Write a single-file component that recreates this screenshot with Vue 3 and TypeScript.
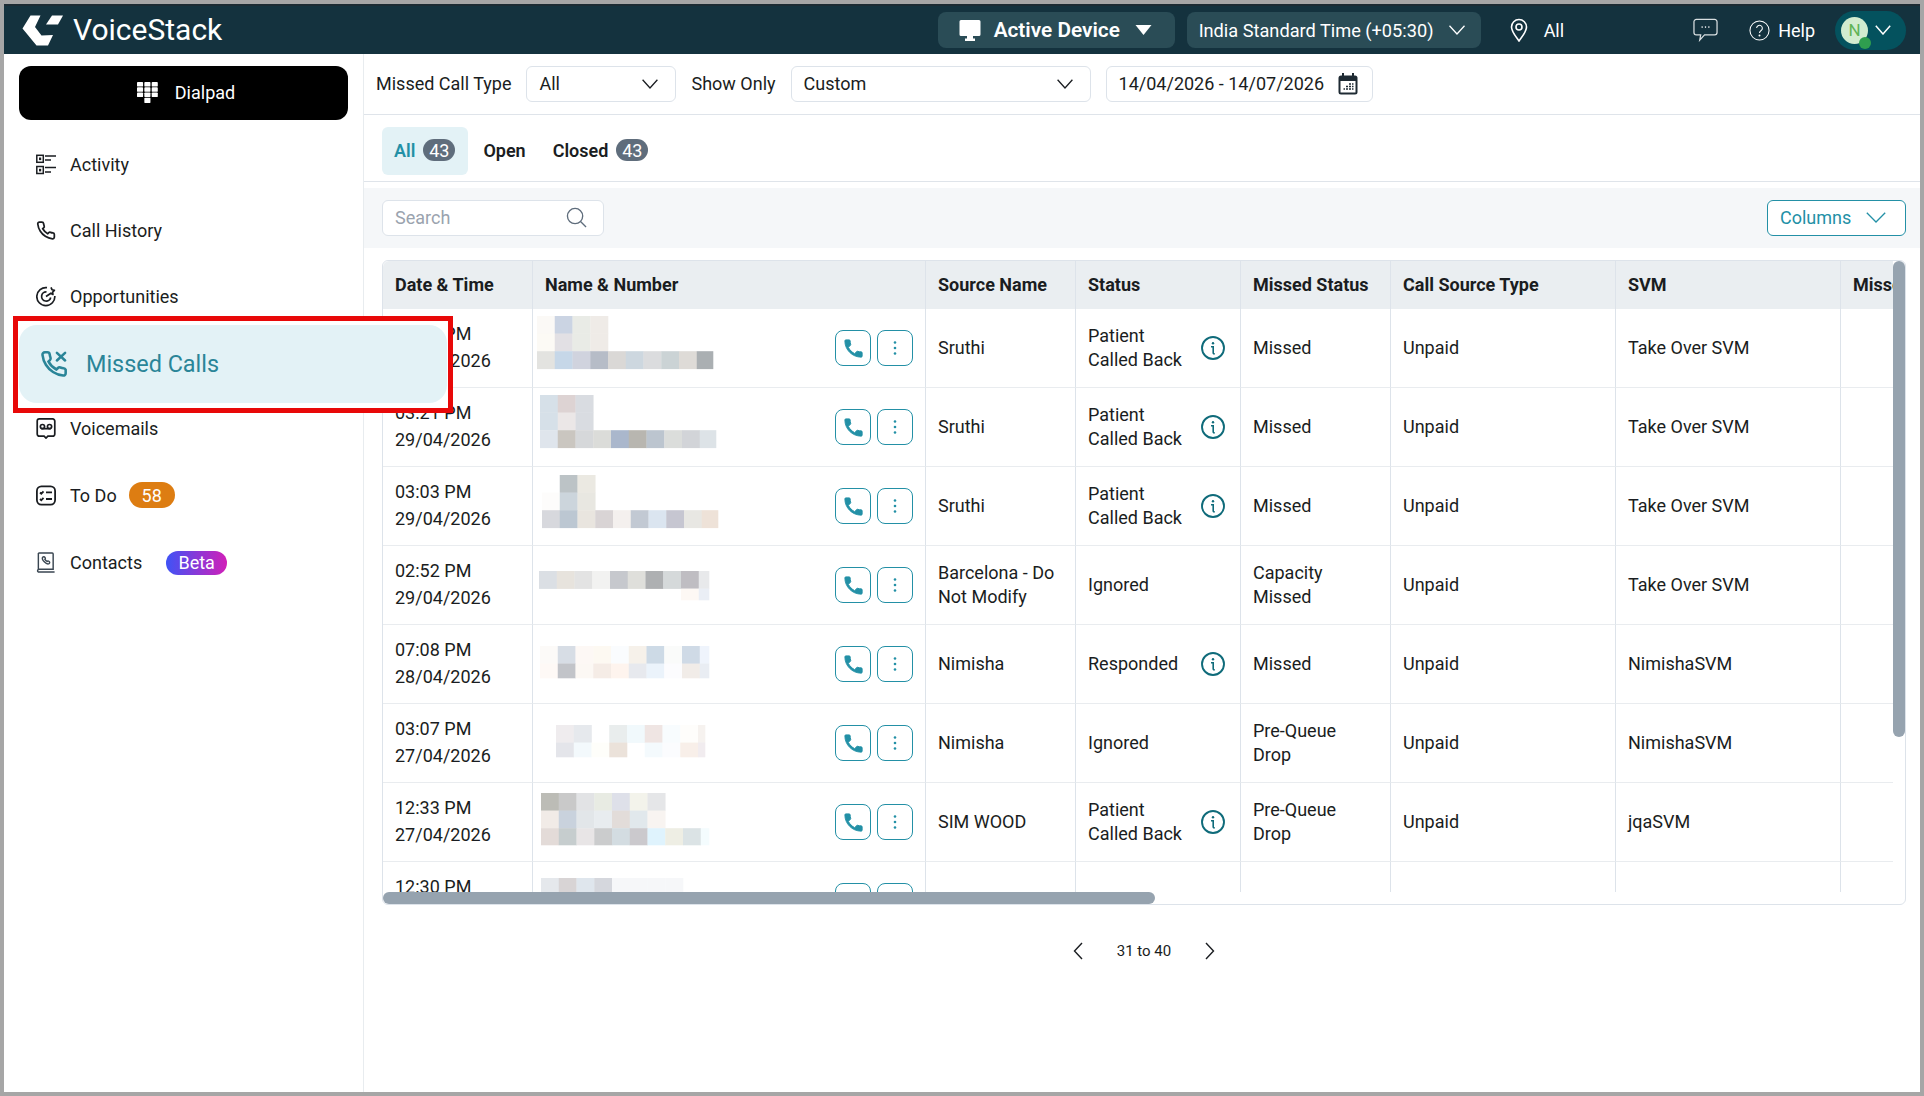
<script setup lang="ts">
interface Mosaic { x: number; y: number; w: number; h: number; cells: string[][] }
interface Row { time: string; date: string; source: string; status: string; info: boolean; missed: string; type: string; svm: string; mosaic: Mosaic }

const STEP_X = 17.75
const STEP_Y = 17.6

const rows: Row[] = [
  { time: '03:28 PM', date: '29/04/2026', source: 'Sruthi', status: 'Patient Called Back', info: true, missed: 'Missed', type: 'Unpaid', svm: 'Take Over SVM',
    mosaic: { x: 4, y: 7, w: 176, h: 53, cells: [
      ['#fbf9f6', '#cbd4e3', '#e9ebe6', '#efebe7'],
      ['#fcfaf5', '#e2e0e4', '#e9ebe6', '#efebe7'],
      ['#e3e3e0', '#c6d7e8', '#d0d3de', '#b6bcc7', '#dad8d6', '#cdd7df', '#dbdcde', '#cbd3d5', '#dedbd7', '#aaafb2']] } },
  { time: '03:21 PM', date: '29/04/2026', source: 'Sruthi', status: 'Patient Called Back', info: true, missed: 'Missed', type: 'Unpaid', svm: 'Take Over SVM',
    mosaic: { x: 7, y: 7, w: 176, h: 53, cells: [
      ['#d6e0e8', '#ddd3d3', '#d9dce1'],
      ['#d6e0e8', '#ebe7e7', '#d9dce1'],
      ['#dfe5ec', '#cac6c0', '#d6d8da', '#dbdcd9', '#aab7cc', '#b8b6b0', '#bcc5cf', '#dbdddb', '#d2d4d8', '#dde3e7']] } },
  { time: '03:03 PM', date: '29/04/2026', source: 'Sruthi', status: 'Patient Called Back', info: true, missed: 'Missed', type: 'Unpaid', svm: 'Take Over SVM',
    mosaic: { x: 9, y: 8, w: 176, h: 53, cells: [
      ['', '#bcc3c6', '#ebe9e2'],
      ['#fdfcfb', '#ccd5dc', '#e8e7e1'],
      ['#d7d8dd', '#bcc7d2', '#e9e5df', '#d9d4d5', '#f4f0ee', '#c2c9d3', '#dbe5f0', '#c6c6d1', '#e8e7e3', '#eee2d8']] } },
  { time: '02:52 PM', date: '29/04/2026', source: 'Barcelona - Do Not Modify', status: 'Ignored', info: false, missed: 'Capacity Missed', type: 'Unpaid', svm: 'Take Over SVM',
    mosaic: { x: 6, y: 25, w: 170, h: 29, cells: [
      ['#dbdfe4', '#e7e3dd', '#e3e3e3', '#f2f2f1', '#c6c8cd', '#dfdfdb', '#aeb0b2', '#d5d9da', '#bfbdc2', '#e8e9eb'],
      ['', '', '', '', '', '', '', '', '#fdf8f4', '#eaeef5']] } },
  { time: '07:08 PM', date: '28/04/2026', source: 'Nimisha', status: 'Responded', info: true, missed: 'Missed', type: 'Unpaid', svm: 'NimishaSVM',
    mosaic: { x: 7, y: 21, w: 169, h: 32, cells: [
      ['#fcfaf8', '#d7dde5', '#fdf8f5', '#fdf9f2', '#fafcfe', '#f6f1ea', '#cddae6', '#fafbfa', '#cfdae6', '#eff4fc'],
      ['#fef9f6', '#c2c4c9', '#fcf8f4', '#f5ece6', '#fef4ee', '#e7e9ee', '#ebf3fb', '#fcfcfe', '#f1ece8', '#e9edf3']] } },
  { time: '03:07 PM', date: '27/04/2026', source: 'Nimisha', status: 'Ignored', info: false, missed: 'Pre-Queue Drop', type: 'Unpaid', svm: 'NimishaSVM',
    mosaic: { x: 23, y: 21, w: 149, h: 32, cells: [
      ['#efecee', '#e6e9ed', '', '#e9eded', '#f1f9fc', '#efe5e3', '#f8fcfe', '#fefdfb', '#f6f2ef'],
      ['#e4e5ea', '#f3f9fc', '#fefefa', '#ebe2da', '', '#f4fafd', '#fbfcfe', '#f8efe9', '#f1ecef']] } },
  { time: '12:33 PM', date: '27/04/2026', source: 'SIM WOOD', status: 'Patient Called Back', info: true, missed: 'Pre-Queue Drop', type: 'Unpaid', svm: 'jqaSVM',
    mosaic: { x: 8, y: 10, w: 168, h: 52, cells: [
      ['#bcbcb6', '#c9c9c9', '#e2e3e5', '#e8ebe3', '#dee0e9', '#f3f3eb', '#e5e6e8'],
      ['#f1ebe7', '#c9d2dd', '#e2e6e9', '#e8ecef', '#e2dcd9', '#e1e8ec', '#f8f4f1'],
      ['#e3dbd8', '#c6cdce', '#e8e5e6', '#cbcccd', '#d3dce1', '#cbc9cd', '#dff3fd', '#eeeee4', '#dbe3e5', '#f4fcfe']] } },
  { time: '12:30 PM', date: '27/04/2026', source: 'SIM WOOD', status: 'Ignored', info: false, missed: 'Missed', type: 'Unpaid', svm: 'jqaSVM',
    mosaic: { x: 8, y: 16, w: 142, h: 18, cells: [
      ['#e5e8ec', '#d8d4d5', '#dfe6ed', '#d5d7dd', '#f6f7f9', '#f6f7f9', '#f6f7f9', '#f6f7f9']] } },
]

const columns: string[] = ['Date & Time', 'Name & Number', 'Source Name', 'Status', 'Missed Status', 'Call Source Type', 'SVM', 'Missed By']
const colWidths: number[] = [150, 393, 150, 165, 150, 225, 225, 200]

function rects(m: Mosaic) {
  const out: { x: number; y: number; w: number; h: number; fill: string }[] = []
  m.cells.forEach((line, r) => {
    line.forEach((fill, c) => {
      if (!fill) return
      const x = c * STEP_X
      const y = r * STEP_Y
      out.push({
        x: m.x + x,
        y: m.y + y,
        w: Math.min(STEP_X, m.w - x),
        h: Math.min(STEP_Y, m.h - y),
        fill,
      })
    })
  })
  return out
}
</script>

<template>
  <div class="frame">
    <header class="topbar">
      <div class="brand">
        <svg class="logo" viewBox="0 0 42 31" width="42" height="31" fill="#fff">
          <polygon points="8.5,0.5 18.5,0.5 13,12 19.5,20.5 31,20 26,30.5 14.5,30.5 0.5,13.5" />
          <polygon points="30,0.5 41,0.5 36,9.5 24,9.5" />
        </svg>
        <span class="brand-name">VoiceStack</span>
      </div>
      <div class="top-right">
        <div class="pill pill-device">
          <svg viewBox="0 0 24 24" width="24" height="26" fill="#fff">
            <path d="M3 2h18a1.5 1.5 0 0 1 1.5 1.5v13A1.5 1.5 0 0 1 21 18h-6v2.5h2V23H7v-2.5h2V18H3a1.5 1.5 0 0 1-1.500-1.500v-13A1.500 1.500 0 0 1 3 2z" />
          </svg>
          <span class="device-text">Active Device</span>
          <svg viewBox="0 0 16 10" width="17" height="10" fill="#fff"><polygon points="0,0 16,0 8,10" /></svg>
        </div>
        <div class="pill pill-tz">
          <span>India Standard Time (+05:30)</span>
          <svg viewBox="0 0 16 10" width="16" height="10" fill="none" stroke="#fff" stroke-width="1.300"><path d="M0.500 0.800 8 9 15.500 0.800" /></svg>
        </div>
        <div class="loc">
          <svg viewBox="0 0 20 24" width="20" height="24" fill="none" stroke="#fff" stroke-width="1.600">
            <path d="M10 23C6 17.500 2.500 13.500 2.500 9a7.500 7.500 0 0 1 15 0C17.500 13.500 14 17.500 10 23z" />
            <circle cx="10" cy="9" r="3" />
          </svg>
          <span>All</span>
        </div>
        <svg class="chat" viewBox="0 0 26 24" width="25" height="24" fill="none" stroke="#d9dfe1" stroke-width="1.300">
          <path d="M3.500 1h19A2.500 2.500 0 0 1 25 3.500v11a2.500 2.500 0 0 1-2.500 2.500H12l-5 5.500 1-5.500H3.500A2.500 2.500 0 0 1 1 14.500v-11A2.500 2.500 0 0 1 3.500 1z" />
          <circle cx="9.500" cy="9" r=".8" fill="#fff" stroke="none" />
          <circle cx="13" cy="9" r=".8" fill="#fff" stroke="none" />
          <circle cx="16.500" cy="9" r=".8" fill="#fff" stroke="none" />
        </svg>
        <div class="help">
          <svg viewBox="0 0 22 22" width="21" height="21" fill="none" stroke="#fff" stroke-width="1.100">
            <circle cx="11" cy="11" r="10" />
            <path d="M8 8.500a3 3 0 1 1 4.700 2.500c-1.100.8-1.700 1.300-1.700 2.700" />
            <circle cx="11" cy="16.200" r=".5" fill="#fff" />
          </svg>
          <span>Help</span>
        </div>
        <div class="user">
          <div class="avatar">N<i class="online"></i></div>
          <svg viewBox="0 0 16 10" width="16" height="10" fill="none" stroke="#fff" stroke-width="1.500"><path d="M0.800 0.800 8 9 15.200 0.800" /></svg>
        </div>
      </div>
    </header>

    <div class="body">
      <aside class="sidebar">
        <button class="dialpad">
          <svg viewBox="0 0 20 20" width="21" height="21" fill="#fff">
            <rect v-for="p in [[0,0],[7,0],[14,0],[0,5],[7,5],[14,5],[0,10],[7,10],[14,10]]" :key="p.join()" :x="p[0]" :y="p[1]" width="5.800" height="4.400" rx=".8" />
            <rect x="7" y="15" width="5.800" height="5" rx=".8" />
          </svg>
          <span>Dialpad</span>
        </button>
        <nav class="nav">
          <a class="nav-item">
            <svg class="ico" viewBox="0 0 20 20" fill="none" stroke="#1a1d21" stroke-width="1.500">
              <rect x=".8" y=".8" width="6.500" height="7" /><rect x="3" y="3" width="2.200" height="2.600" fill="#1a1d21" stroke="none" />
              <rect x=".8" y="12" width="6.500" height="7" /><rect x="3" y="14.300" width="2.200" height="2.600" fill="#1a1d21" stroke="none" />
              <path d="M9 1.500h11M9 5.500h6M9 13h11M9 17.500h6" />
            </svg>
            <span>Activity</span>
          </a>
          <a class="nav-item">
            <svg class="ico" viewBox="0 0 24 24" fill="none" stroke="#1a1d21" stroke-width="2.100">
              <path d="M22 16.920v3a2 2 0 0 1-2.180 2 19.790 19.790 0 0 1-8.630-3.070 19.500 19.500 0 0 1-6-6 19.790 19.790 0 0 1-3.070-8.670A2 2 0 0 1 4.110 2h3a2 2 0 0 1 2 1.720 12.840 12.840 0 0 0 .7 2.810 2 2 0 0 1-.45 2.110L8.090 9.910a16 16 0 0 0 6 6l1.270-1.270a2 2 0 0 1 2.110-.45 12.840 12.840 0 0 0 2.810.7A2 2 0 0 1 22 16.920z" />
            </svg>
            <span>Call History</span>
          </a>
          <a class="nav-item">
            <svg class="ico" viewBox="0 0 20 20" fill="none" stroke="#1a1d21" stroke-width="1.700">
              <path d="M11 1.200A9 9 0 1 0 18.800 9.500" />
              <path d="M10.500 5.400A4.600 4.600 0 1 0 14.700 11" />
              <path d="M15 .8l1 2.400 2.400.6-1.700 1.700.2 2.500-2-1.300L10 10" stroke-linejoin="round" />
            </svg>
            <span>Opportunities</span>
          </a>
          <div class="nav-slot">
            <div class="callout">
              <a class="nav-active">
                <svg viewBox="0 0 24 24" width="28" height="28" fill="none" stroke="#2a8598" stroke-width="2.200" stroke-linecap="round">
                  <path d="M22 16.920v3a2 2 0 0 1-2.180 2 19.790 19.790 0 0 1-8.630-3.070 19.500 19.500 0 0 1-6-6 19.790 19.790 0 0 1-3.070-8.670A2 2 0 0 1 4.110 2h2.200a2 2 0 0 1 2 1.720 12.840 12.840 0 0 0 .7 2.810 2 2 0 0 1-.45 2.110L7.300 9.910a16 16 0 0 0 6.800 6.800l1.270-1.270a2 2 0 0 1 2.110-.45 12.840 12.840 0 0 0 2.810.7A2 2 0 0 1 22 16.920z" />
                  <path d="M14.500 2.500l7 6.500M21.500 2.500l-7 6.500" />
                </svg>
                <span>Missed Calls</span>
              </a>
            </div>
          </div>
          <a class="nav-item">
            <svg class="ico" viewBox="0 0 20 22" fill="none" stroke="#1a1d21" stroke-width="1.800">
              <path d="M3 1h14a2.200 2.200 0 0 1 2.200 2.200v13.600A2.200 2.200 0 0 1 17 19h-5l-2 2-2-2H3A2.200 2.200 0 0 1 .8 16.800V3.200A2.200 2.200 0 0 1 3 1z" />
              <circle cx="6.300" cy="9" r="2.200" /><circle cx="13.700" cy="9" r="2.200" /><path d="M5 11.200h10" />
            </svg>
            <span>Voicemails</span>
          </a>
          <a class="nav-item todo">
            <svg class="ico" viewBox="0 0 20 20" fill="none" stroke="#1a1d21" stroke-width="1.800">
              <rect x=".9" y=".9" width="18.200" height="18.200" rx="4.500" />
              <path d="M4 7l1.300 1.300L7.500 5.800M4 13.500l1.300 1.300 2.200-2.500M10 6.800h6M10 13.500h6" />
            </svg>
            <span>To Do</span>
            <b class="count">58</b>
          </a>
          <a class="nav-item tall">
            <svg class="ico" viewBox="0 0 20 22" fill="none" stroke="#3a4651" stroke-width="1.500">
              <path d="M2 1h14.500a1 1 0 0 1 1 1v16H3a1.600 1.600 0 0 0-1 3h17M2 1v18" />
              <path d="M6.500 5.500c1-1 2-.7 2.600.4.500.8.200 1.400-.2 1.800.6 1 1.200 1.600 2.200 2.200.5-.5 1.100-.7 1.900-.2 1 .7 1.200 1.700.2 2.500-2.800 1.400-8.300-4.300-6.700-6.700z" />
            </svg>
            <span>Contacts</span>
            <b class="beta">Beta</b>
          </a>
        </nav>
      </aside>

      <main class="main">
        <div class="filters">
          <label class="lbl">Missed Call Type</label>
          <div class="select sel-type">
            <span>All</span>
            <svg viewBox="0 0 16 10" width="16" height="10" fill="none" stroke="#1a1d21" stroke-width="1.300"><path d="M0.600 0.800 8 9 15.400 0.800" /></svg>
          </div>
          <label class="lbl">Show Only</label>
          <div class="select sel-show">
            <span>Custom</span>
            <svg viewBox="0 0 16 10" width="16" height="10" fill="none" stroke="#1a1d21" stroke-width="1.300"><path d="M0.600 0.800 8 9 15.400 0.800" /></svg>
          </div>
          <div class="select sel-date">
            <span>14/04/2026 - 14/07/2026</span>
            <svg viewBox="0 0 20 22" width="20" height="22">
              <rect x="0.500" y="2.500" width="19" height="19" rx="2.500" fill="#1e2a33" />
              <rect x="4" y="0" width="2" height="4" fill="#1e2a33" /><rect x="14" y="0" width="2" height="4" fill="#1e2a33" />
              <rect x="2.500" y="8" width="15" height="11.500" fill="#fff" />
              <path d="M11 16h2M14 16h1.500M11 13.500h2M14 13.500h1.500M8 16h2M5.500 16h1.500M8 13.500h2M14 11h1.500M11 11h2" stroke="#1e2a33" stroke-width="1.400" />
            </svg>
          </div>
        </div>

        <div class="tabs">
          <a class="tab active">All <b>43</b></a>
          <a class="tab">Open</a>
          <a class="tab">Closed <b>43</b></a>
        </div>

        <div class="toolbar">
          <div class="search">
            <span>Search</span>
            <svg viewBox="0 0 22 22" width="21" height="21" fill="none" stroke="#5f6d7c" stroke-width="1.400"><circle cx="9.500" cy="9.500" r="8" /><path d="M15.500 15.500 21 21" /></svg>
          </div>
          <div class="columns-btn">
            <span>Columns</span>
            <svg viewBox="0 0 20 11" width="20" height="11" fill="none" stroke="#2390a6" stroke-width="1.300"><path d="M0.800 0.800 10 10 19.200 0.800" /></svg>
          </div>
        </div>

        <div class="table-box">
          <div class="table-clip">
            <table>
              <colgroup><col v-for="(w, i) in colWidths" :key="i" :style="{ width: w + 'px' }" /></colgroup>
              <thead>
                <tr><th v-for="c in columns" :key="c">{{ c }}</th></tr>
              </thead>
              <tbody>
                <tr v-for="(r, i) in rows" :key="i">
                  <td class="when"><div>{{ r.time }}</div><div>{{ r.date }}</div></td>
                  <td class="name">
                    <div class="name-cell">
                      <svg class="mosaic" width="190" height="78">
                        <rect v-for="(c, j) in rects(r.mosaic)" :key="j" :x="c.x" :y="c.y" :width="c.w + 0.300" :height="c.h + 0.300" :fill="c.fill" />
                      </svg>
                      <div class="actions">
                        <button class="act">
                          <svg viewBox="0 0 24 24" width="23" height="23" fill="#2390a6" stroke="#2390a6" stroke-width="1" stroke-linejoin="round"><path d="M6.620 10.790c1.440 2.830 3.760 5.140 6.590 6.590l2.200-2.200c.27-.27.670-.36 1.020-.24 1.120.37 2.330.57 3.570.57.55 0 1 .45 1 1V20c0 .55-.45 1-1 1-9.390 0-17-7.610-17-17 0-.55.45-1 1-1h3.500c.55 0 1 .45 1 1 0 1.250.2 2.450.57 3.570.11.35.03.74-.25 1.020l-2.200 2.200z" /></svg>
                        </button>
                        <button class="act">
                          <svg viewBox="0 0 4 14" width="4" height="14" fill="#2390a6"><circle cx="2" cy="1.500" r="1.300" /><circle cx="2" cy="7" r="1.300" /><circle cx="2" cy="12.500" r="1.300" /></svg>
                        </button>
                      </div>
                    </div>
                  </td>
                  <td>{{ r.source }}</td>
                  <td>
                    <div class="status">
                      <span>{{ r.status }}</span>
                      <svg v-if="r.info" viewBox="0 0 24 24" width="24" height="24" fill="none" stroke="#0f6b7a" stroke-width="1.900">
                        <circle cx="12" cy="12" r="11" />
                        <circle cx="12" cy="7.200" r="1.200" fill="#0f6b7a" stroke="none" />
                        <path d="M10 10.800h2.200v6c0 .9.600 1.100 1.600.9" stroke-width="1.600" />
                      </svg>
                    </div>
                  </td>
                  <td>{{ r.missed }}</td>
                  <td>{{ r.type }}</td>
                  <td>{{ r.svm }}</td>
                  <td></td>
                </tr>
              </tbody>
            </table>
          </div>
          <div class="vscroll"></div>
          <div class="hscroll"></div>
        </div>

        <div class="pager">
          <svg viewBox="0 0 10 18" width="10" height="18" fill="none" stroke="#1a1d21" stroke-width="1.400"><path d="M9 1 1.500 9 9 17" /></svg>
          <span>31 to 40</span>
          <svg viewBox="0 0 10 18" width="10" height="18" fill="none" stroke="#1a1d21" stroke-width="1.400"><path d="M1 1 8.500 9 1 17" /></svg>
        </div>
      </main>
    </div>
  </div>
</template>

<style scoped>
.frame {
  width: 1924px;
  height: 1096px;
  box-sizing: border-box;
  border: 4px solid #a6a6a6;
  background: #fff;
  display: flex;
  flex-direction: column;
  overflow: hidden;
  font-family: Roboto, "Liberation Sans", sans-serif;
  font-size: 18px;
  color: #1a1d21;
}
.topbar {
  height: 50px;
  box-sizing: border-box;
  flex: none;
  background: #14323e;
  border-top: 2px solid #1c2b33;
  display: flex;
  align-items: center;
  justify-content: space-between;
  color: #fff;
}
.brand { display: flex; align-items: center; padding-left: 18px; }
.logo { display: block; }
.brand-name { margin-left: 9px; font-size: 30px; line-height: 1; }
.top-right { display: flex; align-items: center; }
.pill {
  height: 36px;
  border-radius: 8px;
  background: #2a4c56;
  display: flex;
  align-items: center;
  box-sizing: border-box;
}
.pill-device { width: 237px; padding-left: 20px; }
.device-text { margin: 0 15px 0 12px; font-size: 20.8px; font-weight: 600; }
.pill-tz { width: 294px; margin-left: 12px; padding-left: 12px; gap: 15px; font-size: 18.2px; }
.loc { display: flex; align-items: center; margin-left: 28px; gap: 15px; }
.chat { margin-left: 129px; }
.help { display: flex; align-items: center; gap: 8px; margin-left: 31px; }
.user {
  margin: 0 14px 0 20px;
  width: 71px;
  height: 39px;
  box-sizing: border-box;
  border-radius: 20px;
  background: #04525e;
  display: flex;
  align-items: center;
  padding-left: 6px;
  gap: 7px;
}
.avatar {
  position: relative;
  width: 27px;
  height: 27px;
  border-radius: 50%;
  background: #d2ecd0;
  color: #5fb356;
  display: flex;
  align-items: center;
  justify-content: center;
  font-size: 17px;
}
.online {
  position: absolute;
  right: -3px;
  bottom: -5px;
  width: 12px;
  height: 12px;
  border-radius: 50%;
  background: #2f9e4f;
}
.body { flex: 1; display: flex; min-height: 0; }
.sidebar {
  width: 360px;
  flex: none;
  box-sizing: border-box;
  border-right: 1px solid #e8ecef;
  padding: 12px 15px 0;
}
.dialpad {
  width: 329px;
  height: 54px;
  background: #000;
  color: #fff;
  border: 0;
  border-radius: 12px;
  display: flex;
  align-items: center;
  justify-content: center;
  gap: 17px;
  padding: 0 0 2px 5px;
  font: inherit;
}
.nav { margin-top: 11px; display: flex; flex-direction: column; }
.nav-item {
  height: 66px;
  display: flex;
  align-items: center;
  padding-left: 17px;
  color: #1a1d21;
}
.nav-item.todo { height: 68px; }
.nav-item.tall { height: 67px; }
.ico { width: 20px; height: 21px; margin-right: 14px; flex: none; }
.count {
  margin-left: 12px;
  height: 26px;
  width: 46px;
  border-radius: 13px;
  background: #dd7d12;
  color: #fff;
  font-weight: 400;
  display: flex;
  align-items: center;
  justify-content: center;
}
.beta {
  margin-left: 24px;
  height: 24px;
  width: 61px;
  border-radius: 12px;
  background: linear-gradient(90deg, #3f53f6, #d11fb8);
  color: #fff;
  font-weight: 400;
  display: flex;
  align-items: center;
  justify-content: center;
}
.nav-slot { height: 66px; position: relative; }
.callout {
  position: absolute;
  left: -6px;
  top: -13px;
  width: 440px;
  height: 97px;
  box-sizing: border-box;
  border: 5px solid #e80808;
  z-index: 5;
  background: #fff;
  padding: 4px 0 5px 1px;
}
.nav-active {
  height: 100%;
  width: 428px;
  box-sizing: border-box;
  background: #e3f2f6;
  border-radius: 18px;
  display: flex;
  align-items: center;
  padding-left: 21px;
  gap: 18px;
  font-size: 23.4px;
  color: #2a8598;
}
.main { flex: 1; min-width: 0; display: flex; flex-direction: column; }
.filters {
  height: 61px;
  flex: none;
  box-sizing: border-box;
  border-bottom: 1px solid #dfe4ea;
  padding: 12px 0 0 12px;
  display: flex;
  align-items: flex-start;
  gap: 15px;
}
.lbl { line-height: 36px; }
.select {
  height: 36px;
  box-sizing: border-box;
  border: 1px solid #dde3ea;
  border-radius: 6px;
  display: flex;
  align-items: center;
  justify-content: space-between;
  padding: 0 17px 1px 12px;
}
.sel-type { width: 150px; }
.sel-show { width: 300px; }
.sel-date { width: 267px; padding-right: 14px; }
.tabs {
  height: 67px;
  flex: none;
  box-sizing: border-box;
  border-bottom: 1px solid #dfe4ea;
  padding: 12px 0 0 18px;
  display: flex;
  align-items: flex-start;
  gap: 3px;
}
.tab {
  height: 48px;
  box-sizing: border-box;
  border-radius: 6px;
  padding: 0 12px 2px;
  display: flex;
  align-items: center;
  gap: 8px;
  font-weight: 600;
  color: #1a1d21;
}
.tab.active { background: #e3f2f6; color: #2390a6; padding-right: 13px; }
.tab b {
  width: 32px;
  height: 22px;
  border-radius: 11px;
  background: #5f6d7c;
  color: #fff;
  font-weight: 400;
  display: flex;
  align-items: center;
  justify-content: center;
}
.toolbar {
  margin-top: 6px;
  height: 60px;
  flex: none;
  box-sizing: border-box;
  background: #f5f7f9;
  padding: 0 14px 0 18px;
  display: flex;
  align-items: center;
  justify-content: space-between;
}
.search {
  width: 222px;
  height: 36px;
  box-sizing: border-box;
  background: #fff;
  border: 1px solid #dde3ea;
  border-radius: 6px;
  display: flex;
  align-items: center;
  justify-content: space-between;
  padding: 0 16px 1px 12px;
  color: #9aa3ae;
}
.columns-btn {
  width: 139px;
  height: 36px;
  box-sizing: border-box;
  background: #fff;
  border: 1px solid #2390a6;
  border-radius: 6px;
  display: flex;
  align-items: center;
  justify-content: space-between;
  padding: 0 19px 1px 12px;
  color: #2390a6;
}
.table-box {
  position: relative;
  margin: 12px 14px 0 18px;
  height: 645px;
  flex: none;
  box-sizing: border-box;
  border: 1px solid #dde3ea;
  border-radius: 6px;
}
.table-clip {
  width: 1510px;
  height: 631px;
  overflow: hidden;
  border-radius: 6px 0 0 0;
}
table {
  table-layout: fixed;
  border-collapse: separate;
  border-spacing: 0;
  width: 1658px;
}
th {
  height: 48px;
  box-sizing: border-box;
  padding: 0 12px 2px;
  background: #eaeef1;
  border-right: 1px solid #dde3ea;
  text-align: left;
  font-weight: 700;
  white-space: nowrap;
}
td {
  height: 79px;
  box-sizing: border-box;
  padding: 0 12px;
  border-right: 1px solid #dde3ea;
  border-bottom: 1px solid #e9ecef;
  line-height: 24px;
  vertical-align: middle;
}
td.when { line-height: 27px; padding-bottom: 2px; }
td.name { padding: 0 12px 0 0; }
.name-cell { display: flex; align-items: center; justify-content: space-between; height: 78px; }
.mosaic { display: block; flex: none; }
.actions { display: flex; gap: 6px; }
.act {
  width: 36px;
  height: 36px;
  box-sizing: border-box;
  background: #fff;
  border: 1.3px solid #2390a6;
  border-radius: 8px;
  padding: 0;
  display: flex;
  align-items: center;
  justify-content: center;
}
.status { display: flex; align-items: center; justify-content: space-between; padding-right: 3px; }
.status span { width: 100px; }
.vscroll {
  position: absolute;
  right: 0;
  top: 0;
  width: 12px;
  height: 476px;
  background: #96a3af;
  border-radius: 6px;
}
.hscroll {
  position: absolute;
  left: 0;
  bottom: 0;
  width: 772px;
  height: 12px;
  background: #96a3af;
  border-radius: 6px;
}
.pager {
  flex: none;
  height: 91px;
  display: flex;
  align-items: center;
  justify-content: center;
  gap: 34px;
  font-size: 15px;
  padding-left: 4px;
}
</style>
